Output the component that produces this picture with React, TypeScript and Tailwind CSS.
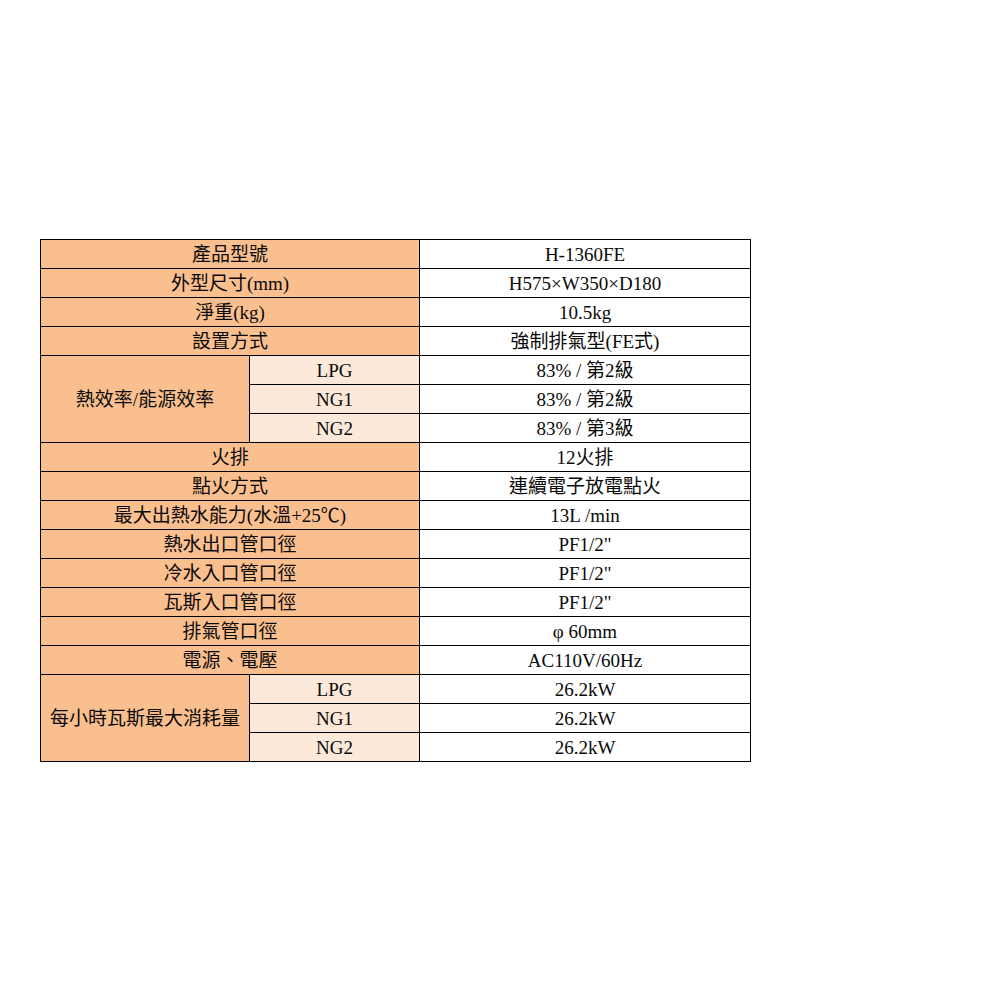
import { Fragment } from "react";

const orange = "bg-[#fabf8f]";
const light = "bg-[#fde9d9]";

type Row =
  | { label: string; value: string }
  | { label: string; subs: { name: string; value: string }[] };

const rows: Row[] = [
  { label: "產品型號", value: "H-1360FE" },
  { label: "外型尺寸(mm)", value: "H575×W350×D180" },
  { label: "淨重(kg)", value: "10.5kg" },
  { label: "設置方式", value: "強制排氣型(FE式)" },
  {
    label: "熱效率/能源效率",
    subs: [
      { name: "LPG", value: "83% / 第2級" },
      { name: "NG1", value: "83% / 第2級" },
      { name: "NG2", value: "83% / 第3級" },
    ],
  },
  { label: "火排", value: "12火排" },
  { label: "點火方式", value: "連續電子放電點火" },
  { label: "最大出熱水能力(水溫+25℃)", value: "13L /min" },
  { label: "熱水出口管口徑", value: "PF1/2\"" },
  { label: "冷水入口管口徑", value: "PF1/2\"" },
  { label: "瓦斯入口管口徑", value: "PF1/2\"" },
  { label: "排氣管口徑", value: "φ 60mm" },
  { label: "電源、電壓", value: "AC110V/60Hz" },
  {
    label: "每小時瓦斯最大消耗量",
    subs: [
      { name: "LPG", value: "26.2kW" },
      { name: "NG1", value: "26.2kW" },
      { name: "NG2", value: "26.2kW" },
    ],
  },
];

const cell = "flex items-center justify-center whitespace-nowrap leading-none";

export default function App() {
  return (
    <div className="min-h-[1000px] bg-white pt-[239px] pl-[40px]">
      {/* spec table: 1px black grid lines via gap over black background */}
      <div
        className="grid w-[711px] grid-cols-[208px_169px_330px] grid-rows-[repeat(18,28px)] gap-px bg-black p-px text-[19px] text-[#0a0a0a]"
        style={{ fontFamily: '"Liberation Serif", "Noto Sans CJK TC", serif' }}
      >
        {rows.map((r) =>
          "value" in r ? (
            <Fragment key={r.label}>
              <div className={`${cell} ${orange} col-span-2`}>{r.label}</div>
              <div className={`${cell} bg-white`}>{r.value}</div>
            </Fragment>
          ) : (
            <Fragment key={r.label}>
              <div className={`${cell} ${orange} row-span-3`}>{r.label}</div>
              {r.subs.map((s) => (
                <Fragment key={s.name}>
                  <div className={`${cell} ${light} col-start-2`}>{s.name}</div>
                  <div className={`${cell} bg-white`}>{s.value}</div>
                </Fragment>
              ))}
            </Fragment>
          )
        )}
      </div>
    </div>
  );
}
